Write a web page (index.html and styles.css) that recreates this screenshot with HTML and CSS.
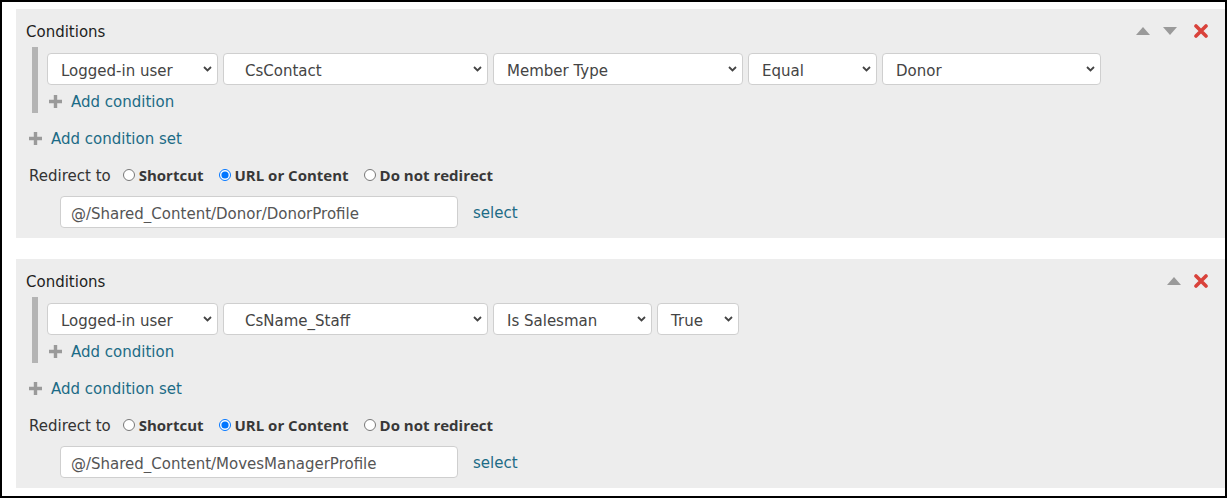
FILE: index.html
```html
<!DOCTYPE html>
<html lang="en">
<head>
  <meta charset="UTF-8" />
  <title>Redirect conditions</title>
  <link rel="stylesheet" href="styles.css">
</head>
<body>
  <div class="frame">

    <section class="panel">
      <div class="panel-head">
        <h3>Conditions</h3>
        <div class="tools">
          <svg class="tool-up" width="14" height="8" viewBox="0 0 14 8"><path d="M7 0 L14 8 L0 8 Z" fill="#9a9a9a"/></svg>
          <svg class="tool-down" width="14" height="8" viewBox="0 0 14 8"><path d="M0 0 L14 0 L7 8 Z" fill="#9a9a9a"/></svg>
          <svg class="tool-del" width="14" height="14" viewBox="0 0 14 14"><path d="M2 2 L12 12 M12 2 L2 12" stroke="#d9423b" stroke-width="3.6" stroke-linecap="round"/></svg>
        </div>
      </div>
      <div class="cond-set">
        <div class="cond-row">
          <div class="select w171"><span>Logged-in user</span><svg width="9" height="6" viewBox="0 0 9 6"><path d="M1 1 L4.5 4.5 L8 1" stroke="#444" stroke-width="1.8" fill="none"/></svg></div>
          <div class="select w265 indent"><span>CsContact</span><svg width="9" height="6" viewBox="0 0 9 6"><path d="M1 1 L4.5 4.5 L8 1" stroke="#444" stroke-width="1.8" fill="none"/></svg></div>
          <div class="select w250"><span>Member Type</span><svg width="9" height="6" viewBox="0 0 9 6"><path d="M1 1 L4.5 4.5 L8 1" stroke="#444" stroke-width="1.8" fill="none"/></svg></div>
          <div class="select w129"><span>Equal</span><svg width="9" height="6" viewBox="0 0 9 6"><path d="M1 1 L4.5 4.5 L8 1" stroke="#444" stroke-width="1.8" fill="none"/></svg></div>
          <div class="select w219"><span>Donor</span><svg width="9" height="6" viewBox="0 0 9 6"><path d="M1 1 L4.5 4.5 L8 1" stroke="#444" stroke-width="1.8" fill="none"/></svg></div>
        </div>
        <a class="add add-cond" href="#"><svg width="13" height="13" viewBox="0 0 13 13"><path d="M6.5 0 V13 M0 6.5 H13" stroke="#9a9a9a" stroke-width="3.4"/></svg>Add condition</a>
      </div>
      <a class="add add-set" href="#"><svg width="13" height="13" viewBox="0 0 13 13"><path d="M6.5 0 V13 M0 6.5 H13" stroke="#9a9a9a" stroke-width="3.4"/></svg>Add condition set</a>
      <div class="redirect">
        <span class="redirect-label">Redirect to</span>
        <label><input type="radio" name="r1">Shortcut</label>
        <label><input type="radio" name="r1" checked>URL or Content</label>
        <label><input type="radio" name="r1">Do not redirect</label>
      </div>
      <div class="target">
        <input type="text" class="url" value="@/Shared_Content/Donor/DonorProfile">
        <a href="#" class="link">select</a>
      </div>
    </section>

    <section class="panel">
      <div class="panel-head">
        <h3>Conditions</h3>
        <div class="tools">
          <svg class="tool-up" width="14" height="8" viewBox="0 0 14 8"><path d="M7 0 L14 8 L0 8 Z" fill="#9a9a9a"/></svg>
          <svg class="tool-del" width="14" height="14" viewBox="0 0 14 14"><path d="M2 2 L12 12 M12 2 L2 12" stroke="#d9423b" stroke-width="3.6" stroke-linecap="round"/></svg>
        </div>
      </div>
      <div class="cond-set">
        <div class="cond-row">
          <div class="select w171"><span>Logged-in user</span><svg width="9" height="6" viewBox="0 0 9 6"><path d="M1 1 L4.5 4.5 L8 1" stroke="#444" stroke-width="1.8" fill="none"/></svg></div>
          <div class="select w265 indent"><span>CsName_Staff</span><svg width="9" height="6" viewBox="0 0 9 6"><path d="M1 1 L4.5 4.5 L8 1" stroke="#444" stroke-width="1.8" fill="none"/></svg></div>
          <div class="select w159"><span>Is Salesman</span><svg width="9" height="6" viewBox="0 0 9 6"><path d="M1 1 L4.5 4.5 L8 1" stroke="#444" stroke-width="1.8" fill="none"/></svg></div>
          <div class="select w82"><span>True</span><svg width="9" height="6" viewBox="0 0 9 6"><path d="M1 1 L4.5 4.5 L8 1" stroke="#444" stroke-width="1.8" fill="none"/></svg></div>
        </div>
        <a class="add add-cond" href="#"><svg width="13" height="13" viewBox="0 0 13 13"><path d="M6.5 0 V13 M0 6.5 H13" stroke="#9a9a9a" stroke-width="3.4"/></svg>Add condition</a>
      </div>
      <a class="add add-set" href="#"><svg width="13" height="13" viewBox="0 0 13 13"><path d="M6.5 0 V13 M0 6.5 H13" stroke="#9a9a9a" stroke-width="3.4"/></svg>Add condition set</a>
      <div class="redirect">
        <span class="redirect-label">Redirect to</span>
        <label><input type="radio" name="r2">Shortcut</label>
        <label><input type="radio" name="r2" checked>URL or Content</label>
        <label><input type="radio" name="r2">Do not redirect</label>
      </div>
      <div class="target">
        <input type="text" class="url" value="@/Shared_Content/MovesManagerProfile">
        <a href="#" class="link">select</a>
      </div>
    </section>

  </div>
</body>
</html>
```

FILE: styles.css
```css
/* redirect conditions editor */
body {
  margin: 0;
  background: #ffffff;
  font-family: 'DejaVu Sans', 'Open Sans', sans-serif;
  font-size: 15px;
  color: #333;
}
.frame {
  width: 1227px;
  height: 498px;
  box-sizing: border-box;
  border: 2px solid #000;
  padding: 7px 0 0 14px;
  display: flex;
  flex-direction: column;
  gap: 21px;
}
.panel {
  background: #ededed;
  padding: 11px 17px 10px 10px;
}
.panel-head {
  display: flex;
  align-items: center;
  justify-content: space-between;
  height: 22px;
  margin-bottom: 5px;
}
.panel-head h3 {
  margin: 0;
  padding-top: 2px;
  font-size: 15px;
  font-weight: normal;
  color: #1e1e1e;
}
.tools {
  display: flex;
  align-items: center;
}
.tool-up, .tool-down { margin-right: 13px; }
.tool-down { margin-right: 17px; }
.tool-del { display: block; }

.cond-set {
  margin-left: 6px;
  border-left: 6px solid #b4b4b4;
  padding: 6px 0 1px 9px;
}
.cond-row {
  display: flex;
  gap: 5px;
}
.select {
  height: 32px;
  box-sizing: border-box;
  background: #fff;
  border: 1px solid #cfcfcf;
  border-radius: 4px;
  padding: 0 5px 0 13px;
  display: flex;
  align-items: center;
  justify-content: space-between;
  color: #444;
}
.select span { padding-top: 4px; }
.select.indent { padding-left: 21px; }
.w171 { width: 171px; }
.w265 { width: 265px; }
.w250 { width: 250px; }
.w129 { width: 129px; }
.w219 { width: 219px; }
.w159 { width: 159px; }
.w82 { width: 82px; }

.add {
  display: flex;
  align-items: center;
  height: 20px;
  color: #1c6b86;
  text-decoration: none;
}
.add svg { margin-right: 9px; margin-bottom: 2px; }
.add-cond { margin-top: 7px; padding-left: 2px; }
.add-set { margin-top: 16px; padding-left: 3px; }

.redirect {
  margin-top: 16px;
  margin-left: 3px;
  height: 20px;
  display: flex;
  align-items: center;
}
.redirect-label {
  color: #333;
  padding-top: 2px;
  margin-right: 12px;
}
.redirect label {
  display: flex;
  align-items: center;
  font-family: 'Open Sans', sans-serif;
  font-weight: 700;
  color: #383838;
  margin-right: 15px;
}
.redirect input {
  width: 12px;
  height: 12px;
  margin: 0 4px 0 0;
}

.target {
  margin-top: 11px;
  margin-left: 34px;
  display: flex;
  align-items: center;
}
.url {
  width: 398px;
  height: 32px;
  box-sizing: border-box;
  border: 1px solid #cfcfcf;
  border-radius: 4px;
  padding: 3px 10px 0;
  font: inherit;
  color: #555;
  background: #fff;
}
.link {
  margin-left: 15px;
  padding-top: 2px;
  color: #1c6b86;
  text-decoration: none;
}
```
